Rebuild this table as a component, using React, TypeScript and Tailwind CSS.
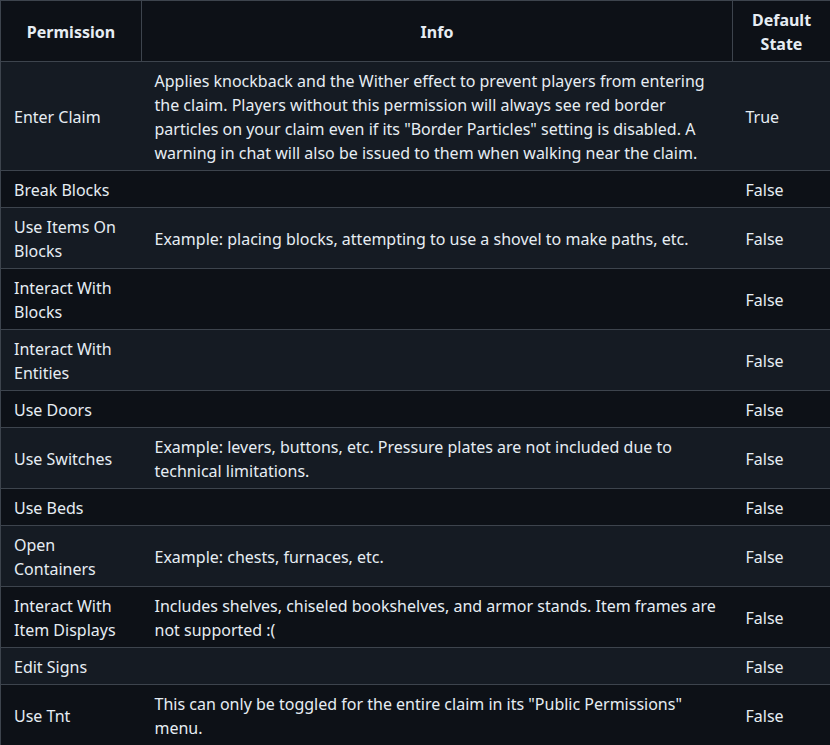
const rows: { name: string; info: string; state: string }[] = [
  {
    name: 'Enter Claim',
    info: 'Applies knockback and the Wither effect to prevent players from entering the claim. Players without this permission will always see red border particles on your claim even if its "Border Particles" setting is disabled. A warning in chat will also be issued to them when walking near the claim.',
    state: 'True',
  },
  { name: 'Break Blocks', info: '', state: 'False' },
  {
    name: 'Use Items On Blocks',
    info: 'Example: placing blocks, attempting to use a shovel to make paths, etc.',
    state: 'False',
  },
  { name: 'Interact With Blocks', info: '', state: 'False' },
  { name: 'Interact With Entities', info: '', state: 'False' },
  { name: 'Use Doors', info: '', state: 'False' },
  {
    name: 'Use Switches',
    info: 'Example: levers, buttons, etc. Pressure plates are not included due to technical limitations.',
    state: 'False',
  },
  { name: 'Use Beds', info: '', state: 'False' },
  { name: 'Open Containers', info: 'Example: chests, furnaces, etc.', state: 'False' },
  {
    name: 'Interact With Item Displays',
    info: 'Includes shelves, chiseled bookshelves, and armor stands. Item frames are not supported :(',
    state: 'False',
  },
  { name: 'Edit Signs', info: '', state: 'False' },
  {
    name: 'Use Tnt',
    info: 'This can only be toggled for the entire claim in its "Public Permissions" menu.',
    state: 'False',
  },
];

export default function App() {
  return (
    <div className="min-h-screen w-[830px] bg-[#0d1117] font-['Noto_Sans',sans-serif] text-[16px] leading-6 text-[#e6edf3]">
      <table className="w-[830px] table-fixed border-collapse">
        <colgroup>
          <col className="w-[141px]" />
          <col className="w-[591px]" />
          <col className="w-[98px]" />
        </colgroup>
        <thead>
          <tr className="bg-[#0d1117]">
            <th className="border border-[#3d444d] px-[13px] pt-[7px] pb-[5px] text-center font-bold">Permission</th>
            <th className="border border-[#3d444d] px-[13px] pt-[7px] pb-[5px] text-center font-bold">Info</th>
            <th className="border border-[#3d444d] px-[13px] pt-[7px] pb-[5px] text-center font-bold">Default State</th>
          </tr>
        </thead>
        <tbody>
          {rows.map((row, index) => (
            <tr key={row.name} className={index % 2 === 0 ? 'bg-[#151b23]' : 'bg-[#0d1117]'}>
              <td className="border-y border-l border-[#3d444d] px-[13px] pt-[7px] pb-[5px] align-middle">{row.name}</td>
              <td className="border-y border-[#3d444d] px-[13px] pt-[7px] pb-[5px] align-middle">{row.info}</td>
              <td className="border-y border-r border-[#3d444d] px-[13px] pt-[7px] pb-[5px] align-middle">{row.state}</td>
            </tr>
          ))}
        </tbody>
      </table>
    </div>
  );
}
